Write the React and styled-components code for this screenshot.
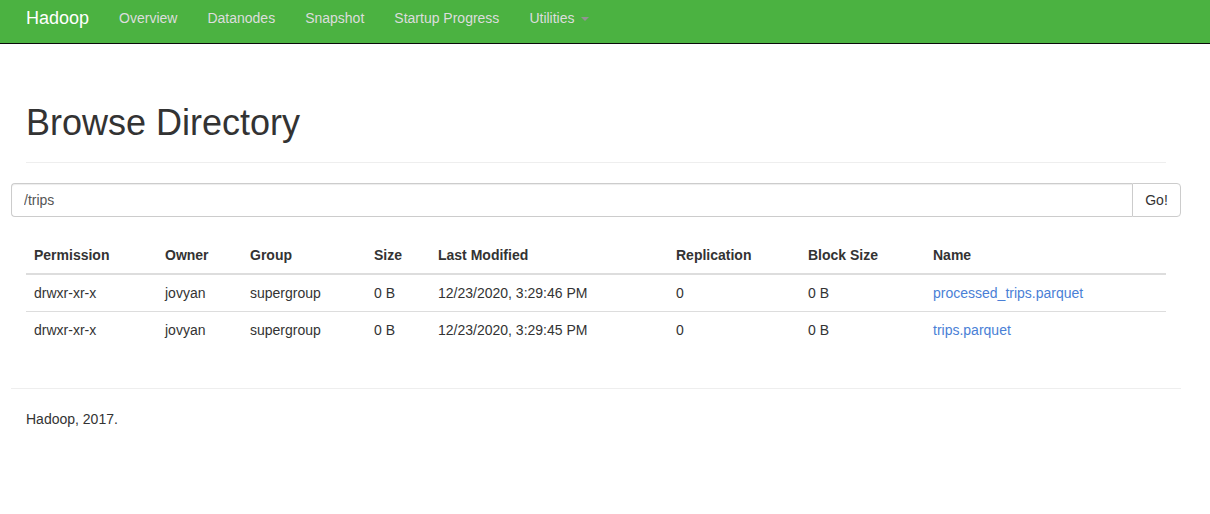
import React from "react";
import styled, { createGlobalStyle } from "styled-components";

const Global = createGlobalStyle`
  html, body { margin: 0; padding: 0; background: #fff; }
  body {
    font-family: "Liberation Sans", Arial, Helvetica, sans-serif;
    font-size: 14px;
    line-height: 20px;
    color: #333;
  }
  * { box-sizing: border-box; }
`;

const Navbar = styled.nav`
  height: 44px;
  background: #4bb241;
  border-bottom: 1px solid #0b0b0b;
  display: flex;
  align-items: center;
  padding-left: 11px;
`;

const Brand = styled.a`
  font-size: 18px;
  line-height: 20px;
  color: #fff;
  padding: 0 15px;
  margin-top: -7px;
  text-decoration: none;
`;

const NavList = styled.ul`
  list-style: none;
  margin: -7px 0 0 0;
  padding: 0;
  display: flex;
`;

const NavItem = styled.li`
  a {
    display: flex;
    align-items: center;
    padding: 0 15px;
    color: #ddd;
    text-decoration: none;
    font-size: 14px;
  }
`;

const Caret = styled.span`
  display: inline-block;
  margin-left: 6px;
  margin-top: 2px;
  width: 0;
  height: 0;
  border-top: 4px solid #939393;
  border-left: 4px solid transparent;
  border-right: 4px solid transparent;
`;

const Container = styled.div`
  width: 1170px;
  margin-left: 11px;
`;

const PageHeader = styled.div`
  margin: 59px 15px 20px;
  padding-bottom: 9px;
  border-bottom: 1px solid #eee;
  h1 {
    margin: 0 0 10px;
    font-size: 36px;
    line-height: 40px;
    font-weight: 500;
    color: #333;
  }
`;

const InputGroup = styled.div`
  display: flex;
  height: 34px;
  margin-bottom: 20px;
`;

const PathInput = styled.input`
  flex: 1;
  height: 34px;
  padding: 6px 12px;
  font-family: inherit;
  font-size: 14px;
  color: #555;
  border: 1px solid #ccc;
  border-right: none;
  border-radius: 4px 0 0 4px;
  box-shadow: inset 0 1px 1px rgba(0,0,0,0.075);
  outline: none;
`;

const GoButton = styled.button`
  width: 49px;
  height: 34px;
  font-family: inherit;
  font-size: 14px;
  color: #333;
  background: #fff;
  border: 1px solid #ccc;
  border-radius: 0 4px 4px 0;
  padding: 6px 12px;
`;

const Table = styled.table`
  margin: 0 15px 20px;
  width: 1140px;
  border-collapse: collapse;
  table-layout: fixed;
`;

const Th = styled.th`
  text-align: left;
  font-weight: bold;
  padding: 8px;
  line-height: 20px;
  border-bottom: 2px solid #ddd;
  width: ${(p) => p.$w}px;
`;

const Td = styled.td`
  padding: 8px;
  line-height: 20px;
  border-top: 1px solid #ddd;
  a { color: #4a7fd6; text-decoration: none; }
`;

const Row = styled.tr`
  &:first-child td { border-top: none; }
`;

const Footer = styled.footer`
  margin-top: 40px;
  border-top: 1px solid #eee;
  padding: 20px 15px;
`;

const cols = [
  ["Permission", 131],
  ["Owner", 85],
  ["Group", 124],
  ["Size", 64],
  ["Last Modified", 238],
  ["Replication", 132],
  ["Block Size", 125],
  ["Name", 241],
];

const rows = [
  ["drwxr-xr-x", "jovyan", "supergroup", "0 B", "12/23/2020, 3:29:46 PM", "0", "0 B", "processed_trips.parquet"],
  ["drwxr-xr-x", "jovyan", "supergroup", "0 B", "12/23/2020, 3:29:45 PM", "0", "0 B", "trips.parquet"],
];

export default function App() {
  return (
    <>
      <Global />
      <Navbar>
        <Brand href="#">Hadoop</Brand>
        <NavList>
          <NavItem><a href="#">Overview</a></NavItem>
          <NavItem><a href="#">Datanodes</a></NavItem>
          <NavItem><a href="#">Snapshot</a></NavItem>
          <NavItem><a href="#">Startup Progress</a></NavItem>
          <NavItem><a href="#">Utilities<Caret /></a></NavItem>
        </NavList>
      </Navbar>
      <Container>
        <PageHeader><h1>Browse Directory</h1></PageHeader>
        <InputGroup>
          <PathInput defaultValue="/trips" />
          <GoButton>Go!</GoButton>
        </InputGroup>
        <Table>
          <thead>
            <tr>
              {cols.map(([c, w]) => <Th key={c} $w={w}>{c}</Th>)}
            </tr>
          </thead>
          <tbody>
            {rows.map((r, i) => (
              <Row key={i}>
                {r.map((v, j) => (
                  <Td key={j}>{j === 7 ? <a href="#">{v}</a> : v}</Td>
                ))}
              </Row>
            ))}
          </tbody>
        </Table>
        <Footer>Hadoop, 2017.</Footer>
      </Container>
    </>
  );
}
